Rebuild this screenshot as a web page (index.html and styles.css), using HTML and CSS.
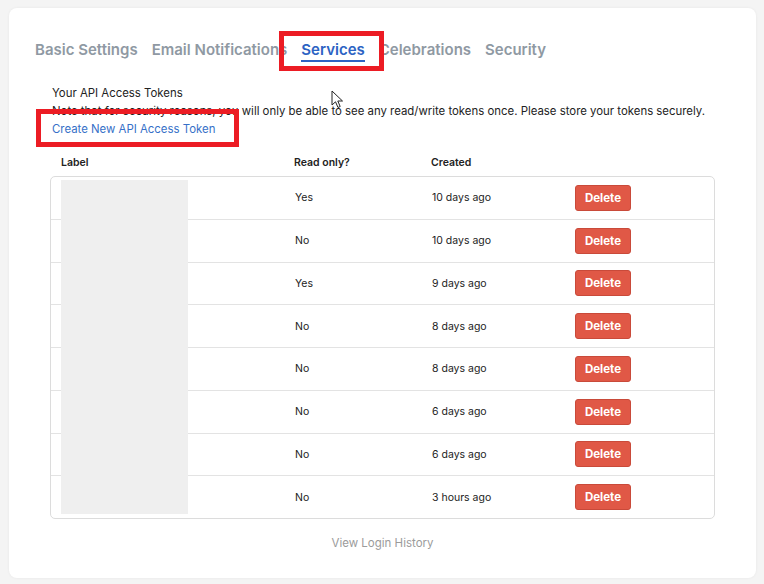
FILE: index.html
```html
<!DOCTYPE html>
<html lang="en">
<head>
    <meta charset="UTF-8">
    <meta name="viewport" content="width=device-width, initial-scale=1.0">
    <title>Account Settings - Services</title>
    <link rel="stylesheet" href="styles.css">
</head>
<body>

    <div class="card">
        <nav class="tabs">
            <a class="tab">Basic Settings</a>
            <a class="tab">Email Notifications</a>
            <a class="tab active">Services</a>
            <a class="tab">Celebrations</a>
            <a class="tab">Security</a>
        </nav>

        <div class="tokens">
            <p class="line">Your API Access Tokens</p>
            <p class="line">Note that for security reasons, you will only be able to see any read/write tokens once. Please store your tokens securely.</p>
            <a class="line link">Create New API Access Token</a>

            <div class="row head">
                <span>Label</span>
                <span>Read only?</span>
                <span>Created</span>
                <span></span>
            </div>

            <div class="table">
                <div class="row"><span></span><span>Yes</span><span>10 days ago</span><span><button class="delete">Delete</button></span></div>
                <div class="row"><span></span><span>No</span><span>10 days ago</span><span><button class="delete">Delete</button></span></div>
                <div class="row"><span></span><span>Yes</span><span>9 days ago</span><span><button class="delete">Delete</button></span></div>
                <div class="row"><span></span><span>No</span><span>8 days ago</span><span><button class="delete">Delete</button></span></div>
                <div class="row"><span></span><span>No</span><span>8 days ago</span><span><button class="delete">Delete</button></span></div>
                <div class="row"><span></span><span>No</span><span>6 days ago</span><span><button class="delete">Delete</button></span></div>
                <div class="row"><span></span><span>No</span><span>6 days ago</span><span><button class="delete">Delete</button></span></div>
                <div class="row"><span></span><span>No</span><span>3 hours ago</span><span><button class="delete">Delete</button></span></div>
                <!-- labels are blanked out -->
                <div class="redacted"></div>
            </div>
        </div>

        <a class="history">View Login History</a>

        <!-- highlight boxes -->
        <div class="mark mark-tab"></div>
        <div class="mark mark-link"></div>

        <svg class="pointer" width="14" height="20" viewBox="0 0 14 20">
            <path d="M1 1 L1 15 L4.5 11.8 L7 17.5 L9.2 16.5 L6.8 11 L11.5 11 Z" fill="#fff" stroke="#222" stroke-width="1" stroke-linejoin="round"/>
        </svg>
    </div>

</body>
</html>
```

FILE: styles.css
```css
body {
    font-family: Inter, "Noto Sans", sans-serif;
    background-color: #f4f4f4;
    color: #222;
    margin: 0;
    padding: 8px 8px 6px 9px;
}
.card {
    position: relative;
    height: 570px;
    box-sizing: border-box;
    padding: 32px 26px 0 26px;
    background: #fff;
    border-radius: 8px;
    box-shadow: 0 0 3px rgba(0, 0, 0, 0.06);
}
.tabs {
    display: flex;
    gap: 14px;
    height: 26px;
}
.tab {
    font-size: 15px;
    font-weight: 600;
    color: #8f99a3;
    line-height: 20px;
    height: 20px;
}
.tab.active {
    color: #2c63c3;
    border-bottom: 2px solid #2c63c3;
}
.tokens {
    padding: 18px 15px 0 15px;
}
.line {
    display: block;
    margin: 0;
    padding-left: 2px;
    font-size: 11.4px;
    line-height: 18px;
    white-space: nowrap;
}
.link {
    color: #3670c8;
}
.row {
    display: grid;
    grid-template-columns: 233px 137px 143px 1fr;
    align-items: center;
    padding-left: 11px;
    font-size: 10.5px;
}
.row.head {
    height: 27px;
    margin-top: 11px;
    font-weight: 600;
}
.table {
    position: relative;
    border: 1px solid #dcdcdc;
    border-radius: 5px;
}
.table .row {
    height: 41.75px;
    border-top: 1px solid #e3e3e3;
}
.table .row:first-child {
    border-top: none;
}
.delete {
    width: 56px;
    height: 26px;
    padding: 0;
    font-family: inherit;
    font-size: 11.5px;
    font-weight: 700;
    color: #fff;
    background: #e05846;
    border: 1px solid #c94a3a;
    border-radius: 3px;
}
.redacted {
    position: absolute;
    left: 10px;
    top: 3px;
    width: 127px;
    height: 334px;
    background: #efefef;
}
.history {
    display: block;
    text-align: center;
    margin-top: 17px;
    font-size: 11.5px;
    color: #9b9b9b;
}
.mark {
    position: absolute;
    border: 5px solid #ec1c24;
}
.mark-tab {
    left: 270px;
    top: 23px;
    width: 95px;
    height: 30px;
}
.mark-link {
    left: 27px;
    top: 101px;
    width: 193px;
    height: 28px;
}
.pointer {
    position: absolute;
    left: 322px;
    top: 82px;
}
```
